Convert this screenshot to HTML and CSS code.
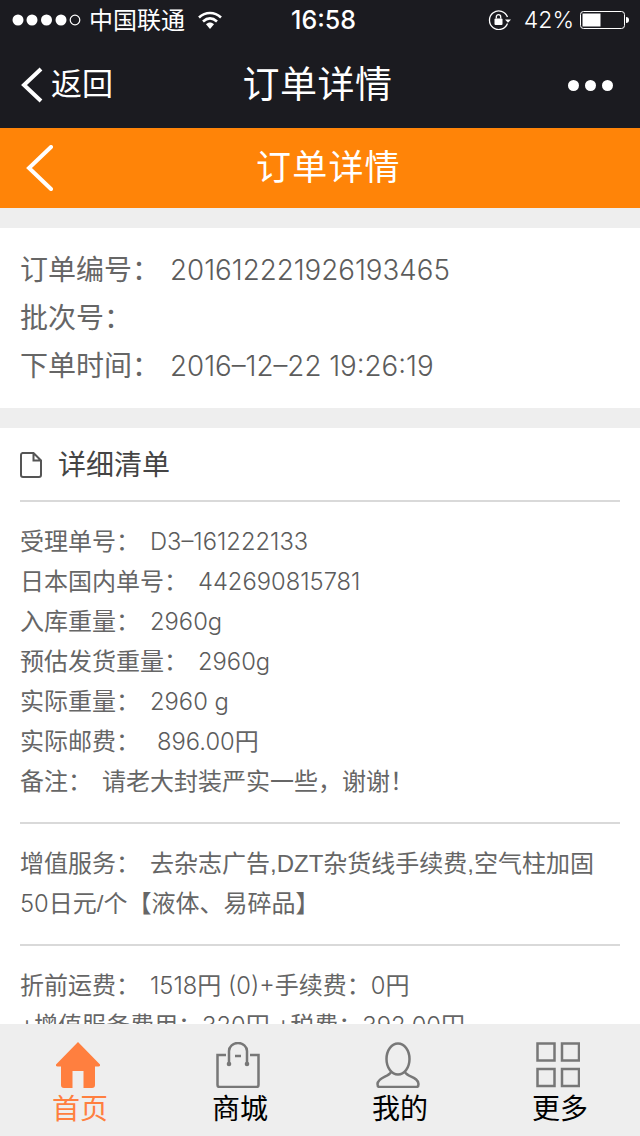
FILE: index.html
```html
<!DOCTYPE html>
<html lang="zh-CN">
<head>
  <meta charset="UTF-8" />
  <meta name="viewport" content="width=device-width, initial-scale=1.0"/>
  <title>订单详情</title>
  <link rel="stylesheet" href="styles.css">
</head>
<body>

<!-- iOS status bar -->
<div class="status-bar">
  <div class="status-left">
    <svg class="signal" width="70" height="14" viewBox="0 0 70 14">
      <circle cx="6" cy="7" r="5.5" fill="#fff"/>
      <circle cx="20" cy="7" r="5.5" fill="#fff"/>
      <circle cx="34.500" cy="7" r="5.500" fill="#fff"/>
      <circle cx="49" cy="7" r="5.500" fill="#fff"/>
      <circle cx="63" cy="7" r="4.800" fill="none" stroke="#fff" stroke-width="1.200"/>
    </svg>
    <span class="carrier">中国联通</span>
    <svg class="wifi" width="24" height="18" viewBox="0 0 24 18">
      <path d="M1 6.500C7.500 .5 16.500 .5 23 6.500" fill="none" stroke="#fff" stroke-width="2.600"/>
      <path d="M5 10.500C9.500 6.500 14.500 6.500 19 10.500" fill="none" stroke="#fff" stroke-width="2.600"/>
      <path d="M8 13.200C10.500 11 13.500 11 16 13.200L12 18Z" fill="#fff"/>
    </svg>
  </div>
  <div class="status-time">16:58</div>
  <div class="status-right">
    <svg class="lock" width="24" height="20" viewBox="0 0 24 20">
      <path d="M19.500 13.500A9.300 9.300 0 1 1 19.500 7" fill="none" stroke="#fff" stroke-width="1.300"/>
      <path d="M17 9.500h6l-3 3.200Z" fill="#fff"/>
      <rect x="6.500" y="8.500" width="8" height="6.500" rx="1" fill="#fff"/>
      <path d="M8.300 8.500V6.800a2.200 2.200 0 0 1 4.400 0V8.500" fill="none" stroke="#fff" stroke-width="1.300"/>
    </svg>
    <span class="battery-text">42%</span>
    <svg width="49" height="18" viewBox="0 0 49 18">
      <rect x=".5" y=".5" width="44" height="17" rx="3" fill="none" stroke="#fff"/>
      <rect x="2.500" y="2.500" width="18" height="13" fill="#fff"/>
      <path d="M46 6c2 0 3 1 3 3s-1 3-3 3Z" fill="#fff"/>
    </svg>
  </div>
</div>

<!-- WeChat nav -->
<header class="wx-nav">
  <a class="wx-back">
    <svg width="22" height="36" viewBox="0 0 22 36">
      <path d="M20 2L3 18l17 16" fill="none" stroke="#fff" stroke-width="4"/>
    </svg>
    <span>返回</span>
  </a>
  <h1>订单详情</h1>
  <div class="wx-more"><i></i><i></i><i></i></div>
</header>

<header class="page-head">
  <svg width="28" height="46" viewBox="0 0 28 46">
    <path d="M25 2L3 23l22 21" fill="none" stroke="#fff" stroke-width="4" stroke-linecap="round"/>
  </svg>
  <h2>订单详情</h2>
</header>

<main class="content">
  <section class="card order-info">
    <p>订单编号：<span class="val num">201612221926193465</span></p>
    <p>批次号：</p>
    <p>下单时间：<span class="val num">2016–12–22 19:26:19</span></p>
  </section>

  <section class="card detail">
    <div class="detail-title">
      <svg width="22" height="26" viewBox="0 0 22 26">
        <path d="M2.500 1h11L21 8.500V23a2 2 0 0 1-2 2H3a2 2 0 0 1-2-2V3a2 2 0 0 1 1.500-2ZM13.500 1v7.500H21" fill="none" stroke="#555" stroke-width="2"/>
      </svg>
      <span>详细清单</span>
    </div>
    <div class="group">
      <p>受理单号：<span class="val num">D3–161222133</span></p>
      <p>日本国内单号：<span class="val num">442690815781</span></p>
      <p>入库重量：<span class="val num">2960g</span></p>
      <p>预估发货重量：<span class="val num">2960g</span></p>
      <p>实际重量：<span class="val num">2960 g</span></p>
      <p>实际邮费：<span class="val wide"><span class="num">896.00</span>円</span></p>
      <p>备注：<span class="val">请老大封装严实一些，谢谢！</span></p>
    </div>
    <div class="group">
      <p>增值服务：<span class="val">去杂志广告,DZT杂货线手续费,空气柱加固</span><br><span class="num">50</span>日元/个【液体、易碎品】</p>
    </div>
    <div class="group">
      <p>折前运费：<span class="val"><span class="num">1518</span>円 <span class="num">(0)+</span>手续费：<span class="num">0</span>円</span></p>
      <p>+增值服务费用：<span class="num">320</span>円 +税费：<span class="num">392.00</span>円</p>
    </div>
  </section>
</main>

<nav class="tab-bar">
  <a class="tab active">
    <svg width="44" height="46" viewBox="0 0 44 46">
      <path d="M22 0L44 22.500c.5 1.500-.5 2-1.500 2H39V43a3 3 0 0 1-3 3H27.500V29h-11V46H8a3 3 0 0 1-3-3V24.500H1.500c-1 0-2-.5-1.500-2Z" fill="#ff7f3f"/>
    </svg>
    <span>首页</span>
  </a>
  <a class="tab">
    <svg width="44" height="46" viewBox="0 0 44 46">
      <g fill="none" stroke="#777" stroke-width="2.500">
        <path d="M10 13H1.500V43a2 2 0 0 0 2 2h37a2 2 0 0 0 2-2V13H34"/>
        <path d="M13 21V9a9 8 0 0 1 18 0v12"/>
        <path d="M19 14h6"/>
      </g>
      <circle cx="13" cy="22" r="2.300" fill="#777"/>
      <circle cx="31" cy="22" r="2.300" fill="#777"/>
    </svg>
    <span>商城</span>
  </a>
  <a class="tab">
    <svg width="44" height="46" viewBox="0 0 44 46">
      <g fill="none" stroke="#777" stroke-width="2.500">
        <ellipse cx="22" cy="17" rx="11.500" ry="15.500"/>
        <path d="M15 30c-2 5-13 5-13.500 12 0 2 1 3 2 3h37c1 0 2-1 2-3C42.500 35 31 35 29 30"/>
      </g>
    </svg>
    <span>我的</span>
  </a>
  <a class="tab">
    <svg width="44" height="46" viewBox="0 0 44 46">
      <g fill="none" stroke="#777" stroke-width="2.500">
        <rect x="1.500" y="1.500" width="17" height="17"/>
        <rect x="26" y="1.500" width="17" height="17"/>
        <rect x="1.500" y="27" width="17" height="17"/>
        <rect x="26" y="27" width="17" height="17"/>
      </g>
    </svg>
    <span>更多</span>
  </a>
</nav>

</body>
</html>
```

FILE: styles.css
```css
:root {
  --dark: #1b1b20;
  --orange: #ff8408;
  --light: #eeeeee;
  --line: #d9d9d9;
  --tab-active: #ff7f3f;
}

* {
  box-sizing: border-box;
  margin: 0;
  padding: 0;
}

body {
  font-family: "Liberation Sans", "Noto Sans CJK SC", sans-serif;
  background: var(--light);
  color: #666;
  height: 1136px;
  overflow: hidden;
}

/* Status bar */
.status-bar {
  height: 40px;
  background: var(--dark);
  color: #fff;
  display: grid;
  grid-template-columns: 1fr auto 1fr;
  align-items: center;
  font-size: 24px;
  padding: 0 11px 0 12px;
}

.status-left, .status-right {
  display: flex;
  align-items: center;
}

.status-right {
  justify-content: flex-end;
}

.carrier {
  margin: 2px 0 0 7px;
  line-height: 38px;
}

.wifi {
  margin-left: 13px;
}

.status-time {
  font-family: Inter, sans-serif;
  font-weight: 500;
  font-size: 25px;
  margin-left: 6px;
}

.lock {
  margin-right: -2px;
}

.battery-text {
  font-family: Inter, sans-serif;
  font-weight: 300;
  font-size: 23px;
  margin: 0 6px 0 14px;
}

/* Nav */
.wx-nav {
  height: 88px;
  background: var(--dark);
  color: #fff;
  display: grid;
  grid-template-columns: 1fr auto 1fr;
  align-items: center;
  padding: 0 27px 0 21px;
}

.wx-back {
  display: flex;
  align-items: center;
  font-size: 31px;
}

.wx-back span {
  margin-left: 8px;
  line-height: 86px;
}

.wx-nav h1 {
  font-size: 37px;
  font-weight: 400;
  line-height: 88px;
  padding-top: 2px;
  letter-spacing: .5px;
  margin-left: 1px;
}

.wx-more {
  display: flex;
  justify-content: flex-end;
  gap: 6px;
}

.wx-more i {
  width: 11px;
  height: 11px;
  border-radius: 50%;
  background: #fff;
}

.page-head {
  height: 80px;
  background: var(--orange);
  color: #fff;
  display: flex;
  align-items: center;
  padding-left: 26px;
}

.page-head h2 {
  font-size: 35px;
  font-weight: 400;
  letter-spacing: 1.200px;
  margin: -8px 0 0 202px;
}

/* Cards */
.content {
  padding-top: 20px;
}

.card {
  background: #fff;
  margin-bottom: 20px;
}

.order-info {
  padding: 19px 20px 17px;
  font-size: 28px;
  line-height: 48px;
}

.val {
  margin-left: 10px;
}

.val.wide {
  margin-left: 17px;
}

.num {
  font-family: Inter, sans-serif;
  font-weight: 300;
  font-size: .99em;
  line-height: 1;
  color: #5c5c5c;
}

.detail {
  padding: 0 20px 60px;
  font-size: 24px;
  line-height: 40px;
}

.detail-title {
  height: 74px;
  display: flex;
  align-items: center;
  font-size: 28px;
  color: #444;
  border-bottom: 2px solid var(--line);
}

.detail-title svg {
  margin: 2px 16px 0 0;
}

.detail-title span {
  padding-top: 4px;
}

.group {
  padding: 20px 0;
  border-bottom: 2px solid var(--line);
}

.group:last-child {
  border-bottom: none;
}

/* Bottom tabs */
.tab-bar {
  position: fixed;
  left: 0;
  right: 0;
  bottom: 0;
  height: 112px;
  background: var(--light);
  display: grid;
  grid-template-columns: repeat(4, 1fr);
}

.tab {
  display: flex;
  flex-direction: column;
  align-items: center;
  padding-top: 18px;
  font-size: 28px;
  color: #000;
}

.tab svg {
  margin-left: -4px;
}

.tab span {
  line-height: 40px;
  padding-top: 2px;
}

.tab.active {
  color: var(--tab-active);
}
```
